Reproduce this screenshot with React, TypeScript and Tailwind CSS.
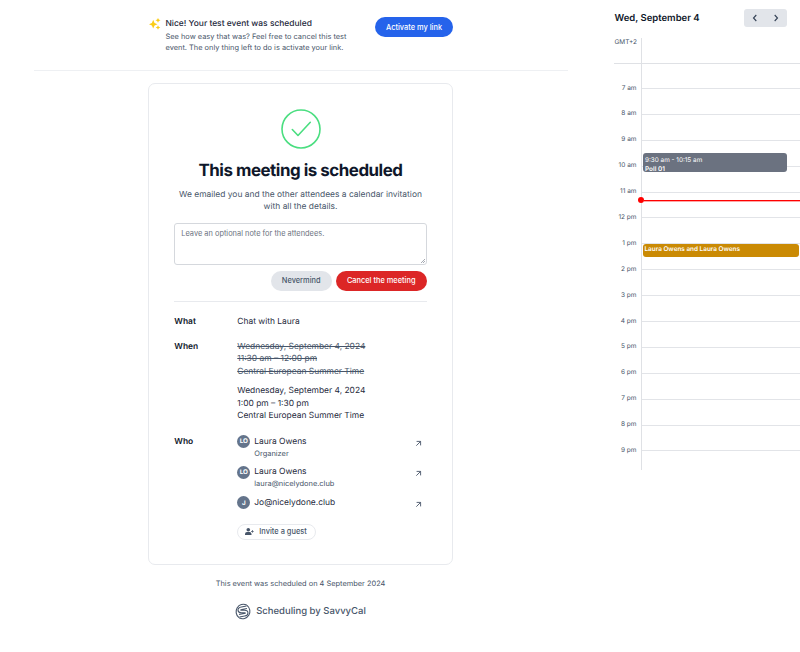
import { ReactNode } from 'react';

const hours = ['7 am', '8 am', '9 am', '10 am', '11 am', '12 pm', '1 pm', '2 pm', '3 pm', '4 pm', '5 pm', '6 pm', '7 pm', '8 pm', '9 pm'];

function Sparkles() {
  return (
    <svg className="mt-[17.5px] h-3 w-3 shrink-0 text-[#facc15]" viewBox="0 0 12 12" fill="currentColor">
      <path d="M4.2 1.8 5.5 4.9l3 1.3-3 1.3-1.3 3.1-1.3-3.1-3-1.3 3-1.3z" />
      <path d="M9 0l.8 1.6 1.7.7-1.7.8L9 4.8l-.8-1.7-1.7-.8 1.7-.7z" />
      <path d="M9 7.2l.7 1.6 1.6.7-1.6.7L9 11.8l-.7-1.6-1.6-.7 1.6-.7z" />
    </svg>
  );
}

function ArrowOut() {
  return (
    <svg className="mt-[5px] mr-[6px] h-[5px] w-[5px] overflow-visible text-[#475569]" viewBox="0 0 5 5" fill="none" stroke="currentColor" strokeWidth="0.9">
      <path d="M0.3 4.7 4.6 0.4M0.6 0.4h4v4" />
    </svg>
  );
}

function Person({ initials, name, detail }: { initials: string; name: string; detail?: string }) {
  return (
    <div className="flex h-[30.7px] items-start">
      <div className="-mt-[0.7px] flex h-[13px] w-[13px] items-center justify-center rounded-full bg-[#64748b] text-[6.3px] leading-none font-bold text-white">{initials}</div>
      <div className="ml-1 flex-1">
        <div className="text-[8.43px] leading-[12.6px] text-[#1e293b]">{name}</div>
        {detail && <div className="-mt-[0.8px] text-[7.45px] leading-[11px] text-[#475569]">{detail}</div>}
      </div>
      <ArrowOut />
    </div>
  );
}

function Row({ label, className, children }: { label: string; className: string; children: ReactNode }) {
  return (
    <div className={`flex text-[8.43px] leading-[12.6px] text-[#1e293b] ${className}`}>
      <div className="w-[63px] font-semibold text-[#0f172a]">{label}</div>
      <div className="flex-1">{children}</div>
    </div>
  );
}

function Logo() {
  const s = 'M12.4 4.5H7.2c-3.4 0-3.4 2.8-.8 3.2l3.2.6c2.6.5 2.4 3.2-.8 3.2H3.6';
  return (
    <svg className="h-[17px] w-4" viewBox="0 0 16 16" fill="none" stroke="#475569" strokeLinecap="round">
      <g transform="rotate(-10 8 8)">
        <path d={s} strokeWidth="3.6" strokeLinecap="butt" />
        <path d={s} stroke="white" strokeWidth="1.5" />
        <path d="M12.6 2.1A7.4 7.4 0 0 0 2.8 13M3.4 13.9A7.4 7.4 0 0 0 13.2 3" strokeWidth="1.1" />
      </g>
    </svg>
  );
}

function Banner() {
  return (
    <div className="ml-[34px] flex h-[71px] w-[534px] border-b border-[#eef0f3]">
      <div className="ml-[115px] flex w-[304px] items-start">
        <Sparkles />
        <div className="ml-[4.5px] flex-1 pt-[18px]">
          <div className="text-[8.43px] leading-[12.6px] font-medium whitespace-nowrap text-[#1e293b]">Nice! Your test event was scheduled</div>
          <div className="mt-[1.4px] text-[7.42px] leading-[10.6px] whitespace-nowrap text-[#475569]">See how easy that was? Feel free to cancel this test<br />event. The only thing left to do is activate your link.</div>
        </div>
        <button className="mt-[17px] h-5 w-[78px] rounded-full bg-[#2563eb] pt-px text-[7.42px] font-medium text-white">Activate my link</button>
      </div>
    </div>
  );
}

function NoteField() {
  return (
    <div className="relative mt-[9px]">
      <textarea className="block h-[42px] w-full resize-none rounded-[3px] border border-[#d5d8dd] px-[6px] py-[4px] text-[7.42px] leading-[11px] placeholder:text-[#6b7280]" placeholder="Leave an optional note for the attendees." />
      <svg className="absolute right-[1.5px] bottom-[1.5px] h-[4px] w-[4px]" viewBox="0 0 4 4" stroke="#6b7280" strokeWidth="0.6">
        <path d="M0 4 4 0M2 4l2-2" />
      </svg>
    </div>
  );
}

function MeetingCard() {
  return (
    <div className="mt-[12px] ml-[148px] h-[482px] w-[305px] rounded-[7px] border border-[#e8eaee] px-[25.3px] pt-[25px]">
      <svg className="mx-auto h-10 w-10" viewBox="0 0 40 40" fill="none" stroke="#4ade80" strokeWidth="1.6" strokeLinecap="round" strokeLinejoin="round">
        <circle cx="20" cy="20" r="19" />
        <path d="M11.3 20.5 17 26.5 29.3 13.3" />
      </svg>
      <h1 className="mt-[11px] text-center text-[16.9px] leading-[22px] font-bold tracking-[-0.028em] text-[#0f172a]">This meeting is scheduled</h1>
      <p className="mt-[6.5px] text-center text-[8.43px] leading-[12.6px] whitespace-nowrap text-[#475569]">We emailed you and the other attendees a calendar invitation<br />with all the details.</p>
      <NoteField />
      <div className="mt-[6px] flex justify-end gap-1 text-[7.42px] font-medium">
        <button className="h-5 w-[61px] rounded-full bg-[#e2e5ea] text-[#475569]">Nevermind</button>
        <button className="h-5 w-[91px] rounded-full bg-[#dc2626] text-white">Cancel the meeting</button>
      </div>
      <div className="mt-[10px] border-t border-[#e8eaee]" />
      <Row label="What" className="mt-[14px]">Chat with Laura</Row>
      <Row label="When" className="mt-[12.6px]">
        <div className="text-[#475569] line-through">
          <div>Wednesday, September 4, 2024</div>
          <div>11:30 am – 12:00 pm</div>
          <div>Central European Summer Time</div>
        </div>
        <div className="mt-[6.6px]">
          <div>Wednesday, September 4, 2024</div>
          <div>1:00 pm – 1:30 pm</div>
          <div>Central European Summer Time</div>
        </div>
      </Row>
      <Row label="Who" className="mt-[12.7px]">
        <Person initials="LO" name="Laura Owens" detail="Organizer" />
        <Person initials="LO" name="Laura Owens" detail="laura@nicelydone.club" />
        <Person initials="J" name="Jo@nicelydone.club" />
        <button className="-mt-[4px] flex h-4 w-[79px] items-center rounded-full border border-[#e8eaee] pl-[7px] text-[7.45px] font-medium text-[#475569]">
          <svg className="mr-[5px] h-[7px] w-[9px]" viewBox="0 0 9 7" fill="currentColor">
            <circle cx="3.3" cy="1.8" r="1.8" />
            <path d="M0 7V6a2 2 0 0 1 2-1.9h2.5a2 2 0 0 1 2 1.9v1z" />
            <path d="M7 2h.7v1h1v.7h-1v1H7v-1H6V3h1z" />
          </svg>
          <span className="pt-[0.5px]">Invite a guest</span>
        </button>
      </Row>
    </div>
  );
}

function Calendar() {
  return (
    <aside className="ml-auto w-[186px] shrink-0 overflow-hidden">
      <div className="flex h-[38px] items-start justify-between pr-[13px]">
        <h2 className="mt-[11.5px] ml-[0.5px] text-[9.5px] leading-[14px] font-semibold text-[#0f172a]">Wed, September 4</h2>
        <div className="mt-[9px] flex h-[18px] w-[43px] items-center justify-around rounded-[3px] bg-[#e2e5ea] text-[#334155]">
          <svg className="h-[6px] w-1 overflow-visible" viewBox="0 0 4 6" fill="none" stroke="currentColor" strokeWidth="1.1"><path d="M3.3 0 .5 3l2.8 3" /></svg>
          <svg className="h-[6px] w-1 overflow-visible" viewBox="0 0 4 6" fill="none" stroke="currentColor" strokeWidth="1.1"><path d="M.7 0l2.8 3L.7 6" /></svg>
        </div>
      </div>
      <div className="relative text-[6.4px] text-[#475569]">
        <div className="flex h-[26px] border-b border-[#dfe1e5]">
          <div className="w-[28px] border-r border-[#dfe1e5] pl-[0.5px] text-[6.5px] leading-2">GMT+2</div>
        </div>
        <div className="flex h-[406px]">
          <div className="w-[28px] border-r border-[#dfe1e5] pt-[10.5px] pr-[4.5px] text-right text-[6.5px]">
            {hours.map((hour) => <div key={hour} className="h-[25.9px] leading-[26px]">{hour}</div>)}
          </div>
          <div className="flex-1">
            <div className="h-[25px] border-b border-[#e2e4e8]" />
            {hours.slice(1).map((hour) => <div key={hour} className="h-[25.9px] border-b border-[#e2e4e8]" />)}
          </div>
        </div>
        <div className="absolute top-[115px] left-[28.5px] h-[19px] w-[144px] overflow-hidden rounded-[3px] bg-[#6b7280] px-[2.5px] pt-[2.5px] leading-[9px] text-white">
          9:30 am - 10:15 am<div className="font-semibold">Poll 01</div>
        </div>
        <div className="absolute top-[161.5px] left-[27px] flex w-[159px] items-center">
          <div className="-my-[3px] -ml-[3px] h-[6px] w-[6px] rounded-full bg-[#ff0000]" />
          <div className="h-px flex-1 bg-[#ff0000] shadow-[0_1px_0_rgba(255,0,0,0.35)]" />
        </div>
        <div className="absolute top-[206px] left-[28.5px] h-[13px] w-[156.5px] rounded-[3px] bg-[#ca8a04] px-[2px] leading-[11.5px] font-semibold text-white">Laura Owens and Laura Owens</div>
      </div>
    </aside>
  );
}

export default function App() {
  return (
    <div className="flex h-[652px] w-[800px] overflow-hidden bg-white font-[Inter,sans-serif] antialiased [text-rendering:geometricPrecision]">
      <main className="w-[601px]">
        <Banner />
        <MeetingCard />
        <footer className="flex flex-col items-center text-[#475569]">
          <p className="mt-[13px] text-[7.42px] leading-[11px]">This event was scheduled on 4 September 2024</p>
          <div className="mt-[14px] flex items-center gap-[5px] text-[9.5px] font-medium"><Logo /><span className="pt-[2px]">Scheduling by SavvyCal</span></div>
        </footer>
      </main>
      <Calendar />
    </div>
  );
}
